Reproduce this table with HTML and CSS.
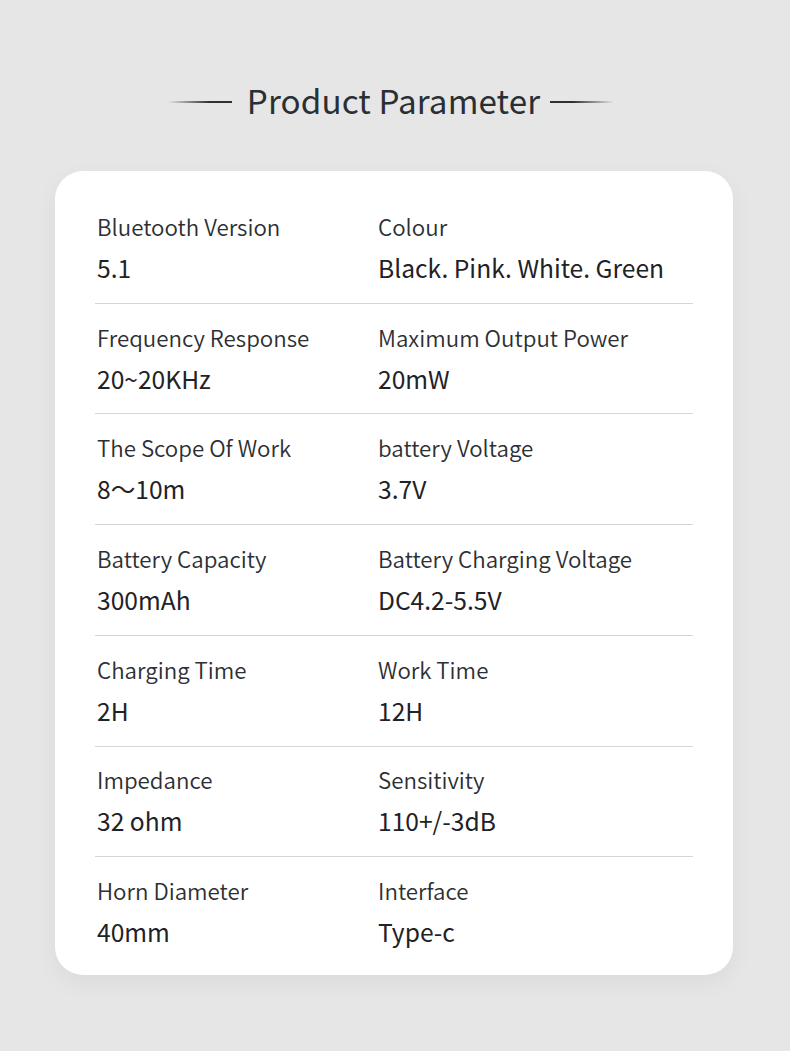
FILE: index.html
```html
<!DOCTYPE html>
<html>
<head>
<meta charset="utf-8">
<link rel="stylesheet" href="styles.css">
</head>
<body>
<div class="page">
  <div class="title">
    <span class="line line-left"></span>
    <h1>Product Parameter</h1>
    <span class="line line-right"></span>
  </div>
  <div class="card">
    <div class="row">
      <div class="cell"><div class="label">Bluetooth Version</div><div class="value">5.1</div></div>
      <div class="cell"><div class="label">Colour</div><div class="value">Black. Pink. White. Green</div></div>
    </div>
    <div class="row">
      <div class="cell"><div class="label">Frequency Response</div><div class="value">20~20KHz</div></div>
      <div class="cell"><div class="label">Maximum Output Power</div><div class="value">20mW</div></div>
    </div>
    <div class="row">
      <div class="cell"><div class="label">The Scope Of Work</div><div class="value">8～10m</div></div>
      <div class="cell"><div class="label">battery Voltage</div><div class="value">3.7V</div></div>
    </div>
    <div class="row">
      <div class="cell"><div class="label">Battery Capacity</div><div class="value">300mAh</div></div>
      <div class="cell"><div class="label">Battery Charging Voltage</div><div class="value">DC4.2-5.5V</div></div>
    </div>
    <div class="row">
      <div class="cell"><div class="label">Charging Time</div><div class="value">2H</div></div>
      <div class="cell"><div class="label">Work Time</div><div class="value">12H</div></div>
    </div>
    <div class="row">
      <div class="cell"><div class="label">Impedance</div><div class="value">32 ohm</div></div>
      <div class="cell"><div class="label">Sensitivity</div><div class="value">110+/-3dB</div></div>
    </div>
    <div class="row">
      <div class="cell"><div class="label">Horn Diameter</div><div class="value">40mm</div></div>
      <div class="cell"><div class="label">Interface</div><div class="value">Type-c</div></div>
    </div>
  </div>
</div>
</body>
</html>
```
FILE: styles.css
```css
html, body {
  margin: 0;
  padding: 0;
}
body {
  background: #e6e6e6;
  font-family: "Noto Sans CJK SC", "Noto Sans", sans-serif;
  width: 790px;
  height: 1051px;
  overflow: hidden;
}
.page {
  padding: 78px 57px 0 55px;
}
.title {
  display: flex;
  align-items: center;
  justify-content: center;
  gap: 14px;
  height: 44px;
  margin-left: -6px;
}
.title h1 {
  margin: 0;
  font-size: 33.2px;
  font-weight: 400;
  color: #2a2f34;
  line-height: 44px;
  letter-spacing: 0.1px;
}
.line {
  display: block;
  width: 64px;
  height: 2px;
  margin-top: 4px;
}
.line-left {
  margin-right: 1px;
  background: linear-gradient(to right, rgba(44,49,54,0), #2c3136 65%);
}
.line-right {
  margin-left: -4px;
  background: linear-gradient(to left, rgba(44,49,54,0), #2c3136 65%);
}
.card {
  margin-top: 49px;
  background: #ffffff;
  border-radius: 28px;
  padding: 22.1px 40px 27px 40px;
  box-shadow: 0 8px 24px rgba(0,0,0,0.05);
}
.row {
  display: grid;
  grid-template-columns: 281px 1fr;
  padding: 17.9px 0 18.8px 2px;
  border-bottom: 1px solid #d6d6d6;
}
.row:last-child {
  border-bottom: none;
  padding-bottom: 0;
}
.label {
  font-size: 22.3px;
  line-height: 30px;
  color: #2c2f33;
  font-weight: 350;
}
.value {
  margin-top: 9px;
  font-size: 24.6px;
  line-height: 34px;
  color: #1f2226;
  font-weight: 400;
}
```
